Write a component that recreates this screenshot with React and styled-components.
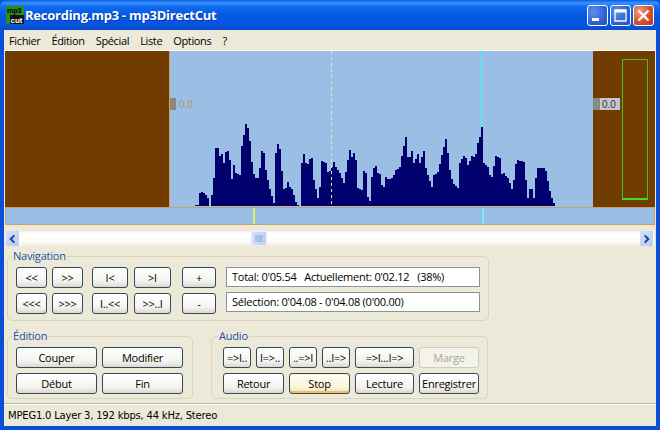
import React from "react";
import styled, { createGlobalStyle } from "styled-components";

const GlobalStyle = createGlobalStyle`
  html, body { margin: 0; padding: 0; background: #0a55e0; }
  body { font-family: "Open Sans", "Liberation Sans", sans-serif; font-size: 11px; color: #000; }
`;

// outline of the wave, read off the reference, in page pixels [x, top]
const leftPeaks = [
  [195,205],[197,205],[198,195],[200,190],[202,193],[204,193],[207,198],[209,206],[211,195],[213,178],[215,148],[218,148],
  [219,156],[222,153],[223,163],[225,152],[228,150],[230,170],[232,188],[233,165],[235,173],[240,175],[241,146],[245,124],
  [248,130],[250,152],[252,172],[255,178],[258,178],[260,157],[262,145],[265,170],[268,185],[272,200],[274,205],[275,153],
  [277,144],[280,152],[282,190],[285,188],[288,179],[289,187],[292,190],[294,200],[297,205],[300,206],[301,163],[303,154],
  [306,168],[308,160],[312,157],[313,180],[317,198],[319,187],[321,161],[325,163],[327,172],[330,170],[333,162],[335,167],
  [340,175],[343,183],[347,160],[349,150],[352,160],[354,145],[355,160],[357,188],[361,190],[362,170],[365,173],[367,197],
  [370,203],[371,177],[374,163],[377,173],[378,169],[381,185],[383,187],[385,177],[388,180],
];
const rightPeaks = [
  [390,178],[392,178],[395,170],[399,167],[402,150],[405,137],[407,157],[409,157],[412,148],[413,163],[417,154],[419,163],
  [423,151],[425,168],[428,178],[432,190],[433,175],[437,172],[441,155],[445,139],[447,153],[449,170],[452,183],[457,188],
  [459,163],[464,154],[467,165],[472,154],[474,160],[477,143],[479,137],[481,127],[483,163],[488,168],[490,182],[495,156],
  [499,158],[500,175],[503,173],[507,178],[510,185],[512,193],[514,166],[517,160],[523,162],[525,180],[527,198],[530,185],
  [533,198],[536,168],[543,168],[546,173],[548,188],[551,198],[554,205],[556,206],
];

const peaks = [...leftPeaks, ...rightPeaks];

function topAt(x) {
  for (let i = 0; i < peaks.length - 1; i++) {
    const [x0, y0] = peaks[i];
    const [x1, y1] = peaks[i + 1];
    if (x >= x0 && x <= x1) return y0 + ((y1 - y0) * (x - x0)) / (x1 - x0 || 1);
  }
  return 206;
}

function wavePath() {
  let d = "M195 206";
  for (let x = 195; x < 556; x += 2) {
    d += `V${Math.round(topAt(x))}H${x + 2}`;
  }
  return d + "V206Z";
}

function App() {
  return (
    <Window>
      <GlobalStyle />
      <TitleBar>
        <AppIcon viewBox="0 0 18 18">
          <rect x="0" y="0" width="18" height="18" fill="#2e8b1e" />
          <rect x="4" y="9" width="14" height="9" fill="#111" />
          <text x="1" y="7" fontSize="7" fontWeight="700" fill="#000" fontFamily="Liberation Sans">mp3</text>
          <text x="4.5" y="16.5" fontSize="8" fontWeight="700" fill="#fff" fontFamily="Liberation Sans">cut</text>
        </AppIcon>
        <TitleText>Recording.mp3 - mp3DirectCut</TitleText>
        <CaptionButtons>
          <CaptionButton>
            <svg width="21" height="21" viewBox="0 0 21 21"><rect x="5" y="13" width="7" height="3" fill="#fff" /></svg>
          </CaptionButton>
          <CaptionButton>
            <svg width="21" height="21" viewBox="0 0 21 21"><path d="M5 5h11v11H5z" fill="none" stroke="#fff" strokeWidth="1.300" /><rect x="5" y="5" width="11" height="2.500" fill="#fff" /></svg>
          </CaptionButton>
          <CaptionButton $close>
            <svg width="21" height="21" viewBox="0 0 21 21"><path d="M5.500 5.500l10 10M15.500 5.500l-10 10" stroke="#fff" strokeWidth="2.200" /></svg>
          </CaptionButton>
        </CaptionButtons>
      </TitleBar>

      <Client>
        <MenuBar>
          <MenuItem>Fichier</MenuItem>
          <MenuItem>Édition</MenuItem>
          <MenuItem>Spécial</MenuItem>
          <MenuItem>Liste</MenuItem>
          <MenuItem>Options</MenuItem>
          <MenuItem>?</MenuItem>
        </MenuBar>

        <WaveArea>
          <SideMask $w={164} />
          <WaveCanvas>
            <svg width="424" height="156" viewBox="169 51 424 156">
              <path d={wavePath()} fill="#00006e" />
              <line x1="331.500" y1="51" x2="331.500" y2="206" stroke="#dcf0a8" strokeDasharray="3 3" />
              <line x1="481.500" y1="51" x2="481.500" y2="127" stroke="#40f4ff" />
            </svg>
            <LeftLevel>
              <LevelTab />
              <span>0.0</span>
            </LeftLevel>
          </WaveCanvas>
          <SideMask $w={62}>
            <RightLevel>
              <LevelTab />
              <span>0.0</span>
            </RightLevel>
            <VuMeter />
          </SideMask>
        </WaveArea>

        <OverviewStrip>
          <StripMark $left={247} $color="#e0f070" />
          <StripMark $left={476} $color="#70f0ff" />
        </OverviewStrip>

        <ScrollBar>
          <ScrollArrow>
            <svg width="14" height="14" viewBox="0 0 14 14"><path d="M9 3L5 7l4 4" fill="none" stroke="#1f3f99" strokeWidth="2" /></svg>
          </ScrollArrow>
          <ScrollTrack>
            <ScrollThumb>
              <svg width="9" height="7" viewBox="0 0 9 7"><path d="M1 0v7M3 0v7M5 0v7M7 0v7" stroke="#8aa6dc" /></svg>
            </ScrollThumb>
          </ScrollTrack>
          <ScrollArrow>
            <svg width="14" height="14" viewBox="0 0 14 14"><path d="M5 3l4 4-4 4" fill="none" stroke="#1f3f99" strokeWidth="2" /></svg>
          </ScrollArrow>
        </ScrollBar>

        <NavGroup>
          <Legend>Navigation</Legend>
          <NavColumns>
            <ButtonRows>
              <Row>
                <Button $w={31}>&lt;&lt;</Button>
                <Button $w={31}>&gt;&gt;</Button>
                <Button $w={36} $ml={4}>I&lt;</Button>
                <Button $w={37} $ml={1}>&gt;I</Button>
                <Button $w={34} $ml={6}>+</Button>
              </Row>
              <Row>
                <Button $w={31}>&lt;&lt;&lt;</Button>
                <Button $w={31}>&gt;&gt;&gt;</Button>
                <Button $w={36} $ml={4}>I..&lt;&lt;</Button>
                <Button $w={37} $ml={1}>&gt;&gt;..I</Button>
                <Button $w={34} $ml={6}>-</Button>
              </Row>
            </ButtonRows>
            <InfoBoxes>
              <InfoBox>Total: 0'05.54&nbsp;&nbsp; Actuellement: 0'02.12&nbsp;&nbsp; (38%)</InfoBox>
              <InfoBox>Sélection: 0'04.08 - 0'04.08 (0'00.00)</InfoBox>
            </InfoBoxes>
          </NavColumns>
        </NavGroup>

        <BottomGroups>
          <EditGroup>
            <Legend>Édition</Legend>
            <ButtonRows>
              <Row>
                <Button $w={81}>Couper</Button>
                <Button $w={81}>Modifier</Button>
              </Row>
              <Row>
                <Button $w={81}>Début</Button>
                <Button $w={81}>Fin</Button>
              </Row>
            </ButtonRows>
          </EditGroup>
          <AudioGroup>
            <Legend $left={6}>Audio</Legend>
            <ButtonRows>
              <Row>
                <Button $w={28}>=&gt;I..</Button>
                <Button $w={28}>I=&gt;..</Button>
                <Button $w={28}>..=&gt;I</Button>
                <Button $w={28}>..I=&gt;</Button>
                <Button $w={59}>=&gt;I...I=&gt;</Button>
                <Button $w={60} disabled>Marge</Button>
              </Row>
              <Row>
                <Button $w={61}>Retour</Button>
                <Button $w={61} $focus>Stop</Button>
                <Button $w={59}>Lecture</Button>
                <Button $w={60}>Enregistrer</Button>
              </Row>
            </ButtonRows>
          </AudioGroup>
        </BottomGroups>

        <StatusBar>MPEG1.0 Layer 3, 192 kbps, 44 kHz, Stereo</StatusBar>
      </Client>
    </Window>
  );
}

export default App;

const Window = styled.div`
  width: 660px;
  height: 430px;
  display: flex;
  flex-direction: column;
  overflow: hidden;
  background: #0a4fd8;
  border-radius: 7px 7px 0 0;
`;

const TitleBar = styled.div`
  height: 30px;
  flex: none;
  display: flex;
  align-items: center;
  padding: 0 6px 0 4px;
  box-sizing: border-box;
  background: linear-gradient(
    180deg,
    #0a5be0 0%,
    #3a93ff 10%,
    #0f6cf0 22%,
    #0558e6 50%,
    #0555e2 80%,
    #0a4cc8 100%
  );
`;

const AppIcon = styled.svg`
  width: 18px;
  height: 18px;
  margin-left: 2px;
  flex: none;
`;

const TitleText = styled.div`
  margin-left: 1px;
  flex: 1;
  color: #fff;
  font-family: "Open Sans", sans-serif;
  font-size: 13px;
  font-weight: 700;
  letter-spacing: -0.25px;
  text-shadow: 1px 1px 0 #0a3aa0;
`;

const CaptionButtons = styled.div`
  display: flex;
  gap: 2px;
`;

const CaptionButton = styled.div`
  width: 21px;
  height: 21px;
  box-sizing: border-box;
  border: 1px solid #fff;
  border-radius: 3px;
  display: flex;
  align-items: center;
  justify-content: center;
  background: ${(p) =>
    p.$close
      ? "radial-gradient(circle at 30% 30%, #f0a080, #d8502c 55%, #b83a18)"
      : "radial-gradient(circle at 30% 30%, #5f90ee, #2f62d8 60%, #2450c0)"};
  svg { margin: -1px; flex: none; }
`;

const Client = styled.div`
  flex: 1;
  margin: 0 4px 4px;
  min-height: 0;
  display: flex;
  flex-direction: column;
  background: #ece9d8;
`;

const MenuBar = styled.div`
  height: 20px;
  flex: none;
  display: flex;
  align-items: center;
  padding-left: 5px;
  gap: 11px;
  border-bottom: 1px solid #fff;
`;

const MenuItem = styled.span`
  font-size: 11px;
  letter-spacing: -0.35px;
`;

const WaveArea = styled.div`
  height: 156px;
  flex: none;
  margin: 0 1px;
  display: flex;
  border-bottom: 1px solid #c8a070;
`;

const SideMask = styled.div`
  position: relative;
  width: ${(p) => p.$w}px;
  flex: none;
  background: #703c00;
`;

const WaveCanvas = styled.div`
  position: relative;
  flex: 1;
  background: #9abee4;
  box-shadow: inset 1px 0 0 #d0a070;
  svg { display: block; }
`;

const LevelTab = styled.i`
  display: block;
  width: 6px;
  height: 12px;
  background: #8a8a84;
`;

const LeftLevel = styled.div`
  position: absolute;
  left: 1px;
  top: 47px;
  display: flex;
  align-items: center;
  gap: 3px;
  font-family: "Liberation Sans", sans-serif;
  font-size: 10px;
  color: #b89858;
`;

const RightLevel = styled.div`
  position: absolute;
  left: 0;
  top: 47px;
  display: flex;
  align-items: center;
  background: #c4c8cc;
  font-family: "Liberation Sans", sans-serif;
  font-size: 10px;
  color: #333;
  i { width: 7px; }
  span { padding: 0 4px 0 2px; }
`;

const VuMeter = styled.div`
  position: absolute;
  left: 29px;
  top: 8px;
  width: 26px;
  height: 141px;
  box-sizing: border-box;
  border: 1px solid #48c020;
  border-bottom: 2px solid #30e818;
`;

const OverviewStrip = styled.div`
  position: relative;
  height: 16px;
  flex: none;
  margin: 0 1px;
  background: #9abee4;
  border: 1px solid #c8a070;
  border-top: 0;
`;

const StripMark = styled.i`
  position: absolute;
  top: 0;
  bottom: 0;
  left: ${(p) => p.$left}px;
  width: 2px;
  background: ${(p) => p.$color};
`;

const ScrollBar = styled.div`
  height: 15px;
  flex: none;
  margin: 6px 2px 0;
  display: flex;
  background: linear-gradient(180deg, #f4f2e6 0%, #ffffff 20%, #fdfcf8 70%, #f0ede0 100%);
`;

const ScrollArrow = styled.div`
  width: 14px;
  height: 15px;
  flex: none;
  display: flex;
  align-items: center;
  justify-content: center;
  background: linear-gradient(135deg, #d4e2fa, #b6caf2);
  border-right: 1px solid #fff;
  box-sizing: border-box;
`;

const ScrollTrack = styled.div`
  flex: 1;
  padding-left: 231px;
  display: flex;
`;

const ScrollThumb = styled.div`
  width: 16px;
  box-sizing: border-box;
  display: flex;
  align-items: center;
  justify-content: center;
  background: linear-gradient(90deg, #d0def8, #c0d2f4);
  border: 1px solid #e8eefb;
  border-radius: 2px;
`;

const GroupBox = styled.div`
  position: relative;
  box-sizing: border-box;
  border: 1px solid #d8d4c0;
  border-radius: 5px;
`;

const Legend = styled.span`
  position: absolute;
  left: ${(p) => p.$left ?? 4}px;
  top: -8px;
  padding: 0 1px;
  font-size: 11px;
  line-height: 14px;
  letter-spacing: -0.2px;
  color: #1f4fa8;
  background: #ece9d8;
`;

const NavGroup = styled(GroupBox)`
  height: 65px;
  width: 482px;
  flex: none;
  margin: 10px 0 0 3px;
  padding: 10px 0 0 8px;
`;

const NavColumns = styled.div`
  display: flex;
  gap: 10px;
`;

const ButtonRows = styled.div`
  display: flex;
  flex-direction: column;
  gap: 5px;
`;

const Row = styled.div`
  display: flex;
  gap: 5px;
`;

const Button = styled.button`
  width: ${(p) => p.$w}px;
  margin-left: ${(p) => p.$ml || 0}px;
  height: 21px;
  padding: 0;
  box-sizing: border-box;
  font-family: "Open Sans", "Liberation Sans", sans-serif;
  font-size: 11px;
  letter-spacing: -0.25px;
  color: #000;
  white-space: nowrap;
  border: 1px solid #2f4a5c;
  border-radius: 3px;
  background: ${(p) =>
    p.$focus
      ? "linear-gradient(180deg, #fffdf4 0%, #fbf4dc 70%, #f4e0ac 100%)"
      : "linear-gradient(180deg, #ffffff 0%, #f4f3ee 70%, #dcd8cc 100%)"};
  box-shadow: ${(p) => (p.$focus ? "inset 0 -2px 0 #eec060, inset 0 1px 0 #fff0c8" : "none")};

  &:disabled {
    color: #a8a698;
    border-color: #cfccbc;
    background: #f4f3ea;
  }
`;

const InfoBoxes = styled.div`
  display: flex;
  flex-direction: column;
  gap: 5px;
`;

const InfoBox = styled.div`
  width: 254px;
  height: 20px;
  box-sizing: border-box;
  padding-left: 5px;
  line-height: 18px;
  font-size: 11px;
  letter-spacing: -0.25px;
  white-space: nowrap;
  background: #fff;
  border: 1px solid #8a9498;
`;

const BottomGroups = styled.div`
  flex: none;
  display: flex;
  margin: 15px 0 0 3px;
  gap: 18px;
`;

const EditGroup = styled(GroupBox)`
  width: 186px;
  height: 63px;
  padding: 10px 0 0 8px;
`;

const AudioGroup = styled(GroupBox)`
  width: 277px;
  height: 63px;
  padding: 10px 0 0 11px;
`;

const StatusBar = styled.div`
  flex: 1;
  margin-top: 4px;
  padding-left: 4px;
  display: flex;
  align-items: center;
  font-family: "DejaVu Sans", sans-serif;
  font-size: 10px;
  letter-spacing: -0.2px;
  border-top: 1px solid #b8b4a0;
  box-shadow: inset 0 1px 0 #fff;
`;
